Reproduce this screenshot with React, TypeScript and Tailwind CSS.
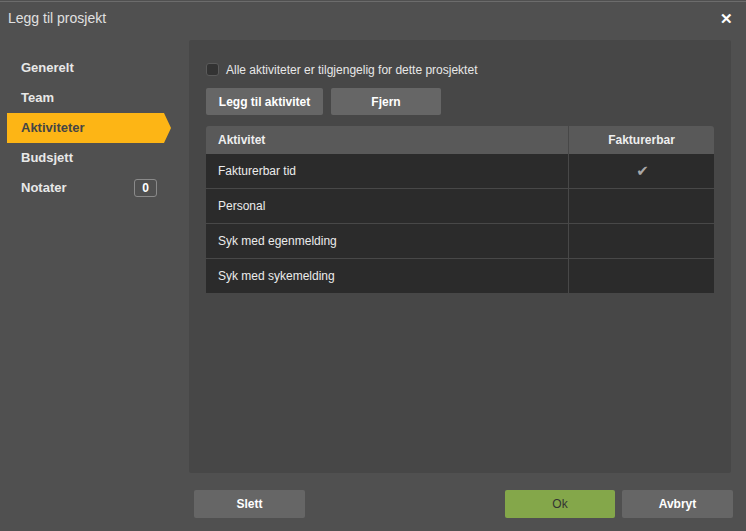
import { useState } from "react";

const menu = ["Generelt", "Team", "Aktiviteter", "Budsjett", "Notater"];

const rows = [
  { name: "Fakturerbar tid", billable: true },
  { name: "Personal", billable: false },
  { name: "Syk med egenmelding", billable: false },
  { name: "Syk med sykemelding", billable: false },
];

export default function App() {
  const [active, setActive] = useState("Aktiviteter");
  const [allChecked, setAllChecked] = useState(false);

  return (
    <div className="w-[746px] h-[531px] bg-[#505050] flex flex-col font-['Liberation_Sans',Arial,sans-serif] overflow-hidden">
      <div className="h-px" />
      <div className="h-px bg-[#6c6c6c]" />

      <div className="h-[38px] flex items-center justify-between pl-[8px] pr-[13px] pb-[5px]">
        <span className="text-[14px] text-[#e0e0e0]">Legg til prosjekt</span>
        <button type="button" className="text-white text-[15px] font-bold leading-none">
          ✕
        </button>
      </div>

      <div className="flex">
        <nav className="w-[189px] pt-[13px] flex flex-col">
          {menu.map((item) => {
            const isActive = item === active;
            return (
              <button
                key={item}
                type="button"
                onClick={() => setActive(item)}
                className={
                  isActive
                    ? "h-[30px] ml-[7px] w-[164px] flex items-center pl-[14px] text-[13px] font-bold text-[#454545] bg-[#fdb515] [clip-path:polygon(0_0,157px_0,164px_50%,157px_100%,0_100%)]"
                    : "h-[30px] ml-[7px] w-[164px] flex items-center justify-between pl-[14px] pr-[14px] text-[13px] font-bold text-[#e8e8e8]"
                }
              >
                <span>{item}</span>
                {item === "Notater" && (
                  <span className="w-[23px] h-[18px] flex items-center justify-center border border-[#8a8a8a] rounded-[3px] text-[12px] text-white">
                    0
                  </span>
                )}
              </button>
            );
          })}
        </nav>

        <div className="w-[542px] h-[433px] bg-[#474747] rounded-[2px] px-[17px] pt-[23px]">
          <label className="flex items-center gap-[7px] h-[13px]">
            <input
              type="checkbox"
              checked={allChecked}
              onChange={(e) => setAllChecked(e.target.checked)}
              className="appearance-none w-[13px] h-[13px] rounded-[3px] bg-[#333333] border border-[#5a5a5a]"
            />
            <span className="text-[12px] text-[#e8e8e8]">
              Alle aktiviteter er tilgjengelig for dette prosjektet
            </span>
          </label>

          <div className="flex gap-[8px] mt-[12px]">
            <button type="button" className="w-[117px] h-[27px] bg-[#666666] rounded-[2px] text-[12px] font-bold text-white">
              Legg til aktivitet
            </button>
            <button type="button" className="w-[110px] h-[27px] bg-[#666666] rounded-[2px] text-[12px] font-bold text-white">
              Fjern
            </button>
          </div>

          <div className="mt-[11px] w-[508px]">
            <div className="flex h-[28px] bg-[#595959] rounded-t-[3px] text-[12px] font-bold text-[#eeeeee]">
              <div className="w-[363px] flex items-center pl-[12px] border-r border-[#474747]">Aktivitet</div>
              <div className="flex-1 flex items-center justify-center">Fakturerbar</div>
            </div>
            {rows.map((row, i) => (
              <div
                key={row.name}
                className={
                  i === 0
                    ? "flex h-[34px] bg-[#2b2b2b] text-[12px] text-[#ececec]"
                    : "flex h-[35px] bg-[#2b2b2b] border-t border-[#484848] text-[12px] text-[#ececec]"
                }
              >
                <div className="w-[363px] flex items-center pl-[12px] border-r border-[#484848]">{row.name}</div>
                <div className="flex-1 flex items-center justify-center pl-[2px] text-[#a8a8a8] text-[15px] font-['DejaVu_Sans',sans-serif]">
                  {row.billable ? "✔" : ""}
                </div>
              </div>
            ))}
          </div>
        </div>
      </div>

      <div className="flex items-center pl-[194px] pr-[13px] pt-[17px]">
        <button type="button" className="w-[111px] h-[28px] bg-[#666666] rounded-[2px] text-[12px] font-bold text-white">
          Slett
        </button>
        <div className="flex-1" />
        <button type="button" className="w-[110px] h-[28px] bg-[#84a74a] rounded-[2px] text-[12px] text-[#333333]">
          Ok
        </button>
        <button type="button" className="ml-[7px] w-[111px] h-[28px] bg-[#666666] rounded-[2px] text-[12px] font-bold text-white">
          Avbryt
        </button>
      </div>
    </div>
  );
}
